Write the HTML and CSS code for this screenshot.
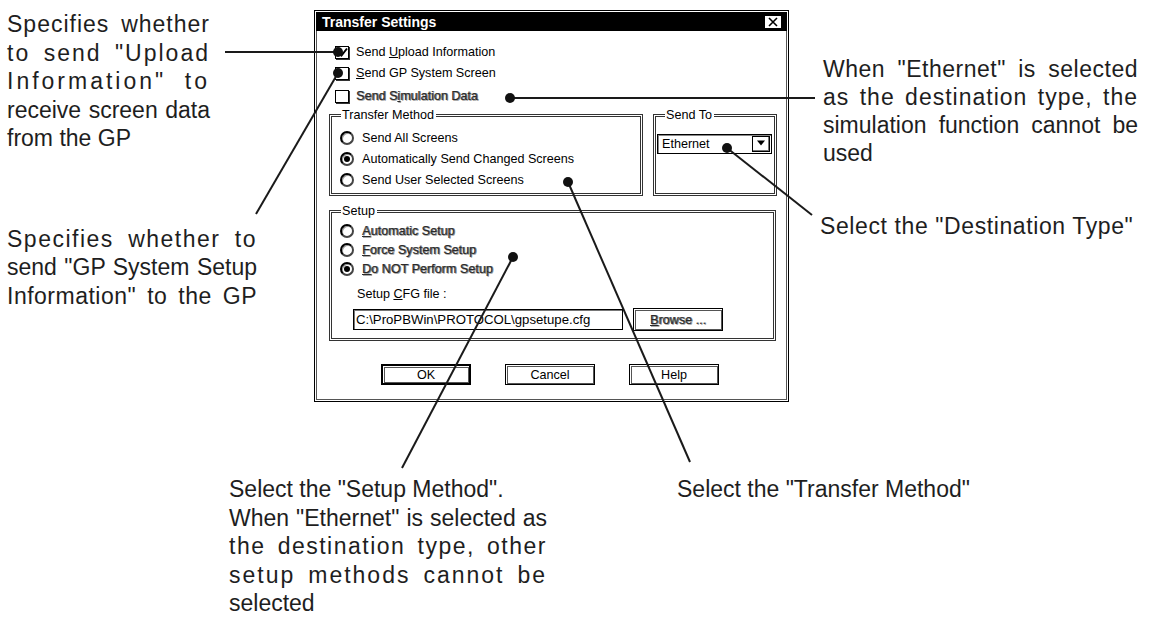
FILE: index.html
```html
<!DOCTYPE html>
<html lang="en">
<head>
    <meta charset="UTF-8">
    <title>Transfer Settings</title>
    <link rel="stylesheet" href="styles.css">
</head>
<body>
    <div class="figure">
        <div class="notes-left">
            <p class="note note-upload">
                <span class="ln j s1">Specifies whether</span>
                <span class="ln j s2">to send "Upload</span>
                <span class="ln j s3">Information" to</span>
                <span class="ln j">receive screen data</span>
                <span class="ln">from the GP</span>
            </p>
            <p class="note note-system">
                <span class="ln j s15">Specifies whether to</span>
                <span class="ln j">send "GP System Setup</span>
                <span class="ln j s05">Information" to the GP</span>
            </p>
        </div>

        <div class="dialog">
            <div class="titlebar">
                <span class="title">Transfer Settings</span>
                <span class="close">
                    <svg width="16" height="12" viewBox="0 0 16 12">
                        <path d="M4 2 L12 10 M12 2 L4 10" stroke="#000" stroke-width="1.6" fill="none"/>
                    </svg>
                </span>
            </div>
            <div class="dialog-body">
                <div class="checks">
                    <div class="check">
                        <span class="box">
                            <svg width="11" height="11" viewBox="0 0 11 11">
                                <path d="M1.5 5.5 L4.5 8.5 L10 1.5" stroke="#000" stroke-width="2" fill="none"/>
                            </svg>
                        </span>
                        <span>Send <u>U</u>pload Information</span>
                    </div>
                    <div class="check">
                        <span class="box"></span>
                        <span><u>S</u>end GP System Screen</span>
                    </div>
                    <div class="check check-last">
                        <span class="box"></span>
                        <span class="disabled">Send S<u>i</u>mulation Data</span>
                    </div>
                </div>

                <div class="groups">
                    <div class="group group-transfer">
                        <span class="group-label">Transfer Method</span>
                        <div class="option"><span class="radio"></span>Send All Screens</div>
                        <div class="option"><span class="radio on"></span>Automatically Send Changed Screens</div>
                        <div class="option"><span class="radio"></span>Send User Selected Screens</div>
                    </div>
                    <div class="group group-sendto">
                        <span class="group-label">Send To</span>
                        <div class="combo">
                            <span class="combo-text">Ethernet</span>
                            <span class="combo-btn">
                                <svg width="10" height="6" viewBox="0 0 10 6">
                                    <path d="M1 0.5 H9 L5 5.5 Z" fill="#000"/>
                                </svg>
                            </span>
                        </div>
                    </div>
                </div>

                <div class="group group-setup">
                    <span class="group-label">Setup</span>
                    <div class="option option-sm"><span class="radio"></span><span class="disabled"><u>A</u>utomatic Setup</span></div>
                    <div class="option option-sm"><span class="radio"></span><span class="disabled"><u>F</u>orce System Setup</span></div>
                    <div class="option option-sm"><span class="radio on"></span><span class="disabled"><u>D</u>o NOT Perform Setup</span></div>
                    <div class="file-label">Setup <u>C</u>FG file :</div>
                    <div class="file-row">
                        <div class="edit">C:\ProPBWin\PROTOCOL\gpsetupe.cfg</div>
                        <div class="btn btn-browse"><span class="disabled"><u>B</u>rowse ...</span></div>
                    </div>
                </div>

                <div class="buttons">
                    <div class="btn btn-default">OK</div>
                    <div class="btn">Cancel</div>
                    <div class="btn">Help</div>
                </div>
            </div>
        </div>

        <div class="notes-right">
            <p class="note note-sim">
                <span class="ln j s05">When "Ethernet" is selected</span>
                <span class="ln j s1">as the destination type, the</span>
                <span class="ln j">simulation function cannot be</span>
                <span class="ln">used</span>
            </p>
            <p class="note note-dest">
                <span class="ln">Select the "Destination Type"</span>
            </p>
        </div>

        <div class="notes-bottom">
            <p class="note note-setup">
                <span class="ln">Select the "Setup Method".</span>
                <span class="ln j">When "Ethernet" is selected as</span>
                <span class="ln j s15">the destination type, other</span>
                <span class="ln j s2">setup methods cannot be</span>
                <span class="ln">selected</span>
            </p>
            <p class="note note-transfer">
                <span class="ln">Select the "Transfer Method"</span>
            </p>
        </div>

        <svg class="leaders" width="1153" height="617" viewBox="0 0 1153 617">
            <g stroke="#1a1a1a" stroke-width="2" fill="none">
                <line x1="225" y1="52" x2="338" y2="52"/>
                <line x1="256" y1="214" x2="338" y2="73"/>
                <line x1="510" y1="98" x2="815" y2="98"/>
                <line x1="727" y1="148" x2="812" y2="215"/>
                <line x1="568" y1="182" x2="690" y2="462"/>
                <line x1="513" y1="257" x2="402" y2="468"/>
            </g>
            <g fill="#111">
                <circle cx="338" cy="52" r="5"/>
                <circle cx="338" cy="73" r="5"/>
                <circle cx="510" cy="98" r="5"/>
                <circle cx="727" cy="148" r="5"/>
                <circle cx="568" cy="182" r="5"/>
                <circle cx="513" cy="257" r="5"/>
            </g>
        </svg>
    </div>
</body>
</html>
```

FILE: styles.css
```css
body {
    margin: 0;
    background: #fff;
    font-family: "Liberation Sans", Arial, sans-serif;
    color: #1e1e1e;
}
.figure {
    position: relative;
    width: 1153px;
    height: 617px;
    display: grid;
    grid-template-columns: 314px 475px 1fr;
    grid-template-rows: 402px 1fr;
    overflow: hidden;
}

/* annotation text */
.note {
    margin: 0;
    font-size: 23px;
    line-height: 28.5px;
}
.note .ln {
    display: block;
}
.note .j {
    text-align-last: justify;
}
.s05 { letter-spacing: 0.5px; }
.s1 { letter-spacing: 1px; }
.s15 { letter-spacing: 1.5px; }
.s2 { letter-spacing: 2px; }
.s3 { letter-spacing: 3px; }

.notes-left {
    grid-column: 1;
    grid-row: 1;
    padding-left: 7px;
}
.note-upload {
    width: 203px;
    margin-top: 10px;
}
.note-system {
    width: 250px;
    margin-top: 72px;
}
.notes-right {
    grid-column: 3;
    grid-row: 1;
    padding-left: 34px;
}
.note-sim {
    width: 315px;
    margin-top: 55px;
    line-height: 28px;
}
.note-dest {
    margin: 45px 0 0 -3px;
    letter-spacing: 0.6px;
}
.notes-bottom {
    grid-column: 1 / -1;
    grid-row: 2;
    display: flex;
    align-items: flex-start;
    padding-top: 73px;
}
.note-setup {
    width: 318px;
    margin-left: 229px;
}
.note-transfer {
    margin-left: 130px;
}

/* dialog */
.dialog {
    grid-column: 2;
    grid-row: 1;
    margin-top: 10px;
    height: 392px;
    box-sizing: border-box;
    border: 1px solid #000;
    padding: 1px;
    display: flex;
    flex-direction: column;
    font-size: 12.6px;
    color: #000;
}
.titlebar {
    height: 19px;
    flex: none;
    background: #000;
    color: #fff;
    display: flex;
    align-items: center;
    justify-content: space-between;
    padding: 0 5px 0 6px;
    font-size: 14px;
    font-weight: bold;
}
.close {
    width: 18px;
    height: 14px;
    box-sizing: border-box;
    background: #fff;
    border: 1px solid #000;
    display: flex;
    align-items: center;
    justify-content: center;
}
.dialog-body {
    flex: 1;
    border: 1px solid #555;
    border-top: 0;
    padding: 11px 0 0 12px;
}
.disabled {
    color: #2a2a2a;
    text-shadow: 1px 0 0 #777, 1px 1px 0 #aaa;
}

.check {
    display: flex;
    align-items: center;
    height: 20px;
    margin: 0 0 1px 6px;
}
.check-last {
    margin-top: 3px;
}
.box {
    width: 14px;
    height: 13px;
    box-sizing: border-box;
    border: 1px solid #000;
    box-shadow: 1px 1px 0 #333;
    margin-right: 7px;
    display: flex;
    align-items: center;
    justify-content: center;
    background: #fff;
}

.groups {
    display: flex;
    gap: 10px;
    margin-top: 8px;
}
.group {
    position: relative;
    box-sizing: border-box;
    border: 3px double #333;
}
.group-label {
    position: absolute;
    top: -9px;
    left: 9px;
    padding: 0 2px 0 1px;
    line-height: 15px;
    background: #fff;
}
.group-transfer {
    width: 314px;
    height: 82px;
    padding: 10px 0 0 8px;
}
.group-sendto {
    width: 124px;
    height: 82px;
    padding: 17px 0 0 1px;
}
.group-setup {
    width: 447px;
    height: 131px;
    margin-top: 14px;
    padding: 8px 0 0 8px;
}

.option {
    display: flex;
    align-items: center;
    height: 21px;
}
.option-sm {
    height: 19px;
}
.radio {
    width: 14px;
    height: 14px;
    box-sizing: border-box;
    border-radius: 50%;
    border: 2px solid #000;
    border-right-color: #444;
    border-bottom-color: #444;
    box-shadow: inset 1px 1px 0 #999;
    margin-right: 8px;
    display: flex;
    align-items: center;
    justify-content: center;
}
.radio.on::after {
    content: "";
    width: 6px;
    height: 6px;
    border-radius: 50%;
    background: #000;
}

.combo {
    width: 115px;
    height: 20px;
    box-sizing: border-box;
    border: 1px solid #000;
    box-shadow: inset 1px 1px 0 #888;
    display: flex;
    align-items: center;
}
.combo-text {
    padding-left: 4px;
}
.combo-btn {
    margin: 1px 1px 1px auto;
    width: 18px;
    align-self: stretch;
    box-sizing: border-box;
    border: 1px solid #000;
    box-shadow: inset -1px -1px 0 #777;
    display: flex;
    justify-content: center;
    padding-top: 3px;
}

.file-label {
    margin: 9px 0 0 17px;
    line-height: 15px;
}
.file-row {
    display: flex;
    align-items: center;
    gap: 10px;
    margin: 6px 0 0 13px;
}
.edit {
    width: 270px;
    height: 21px;
    box-sizing: border-box;
    border: 1px solid #000;
    box-shadow: inset 1px 1px 0 #777;
    padding-left: 2px;
    font-size: 13.2px;
    display: flex;
    align-items: center;
}

.buttons {
    display: flex;
    gap: 34px;
    margin: 23px 0 0 52px;
}
.btn {
    width: 90px;
    height: 21px;
    box-sizing: border-box;
    border: 1px solid #000;
    box-shadow: inset 1px 1px 0 #fff, inset 2px 2px 0 #555, inset -1px -1px 0 #555;
    display: flex;
    align-items: center;
    justify-content: center;
}
.btn-default {
    border-width: 2px;
}
.btn-browse {
    height: 23px;
}

.leaders {
    position: absolute;
    top: 0;
    left: 0;
    pointer-events: none;
}
```
